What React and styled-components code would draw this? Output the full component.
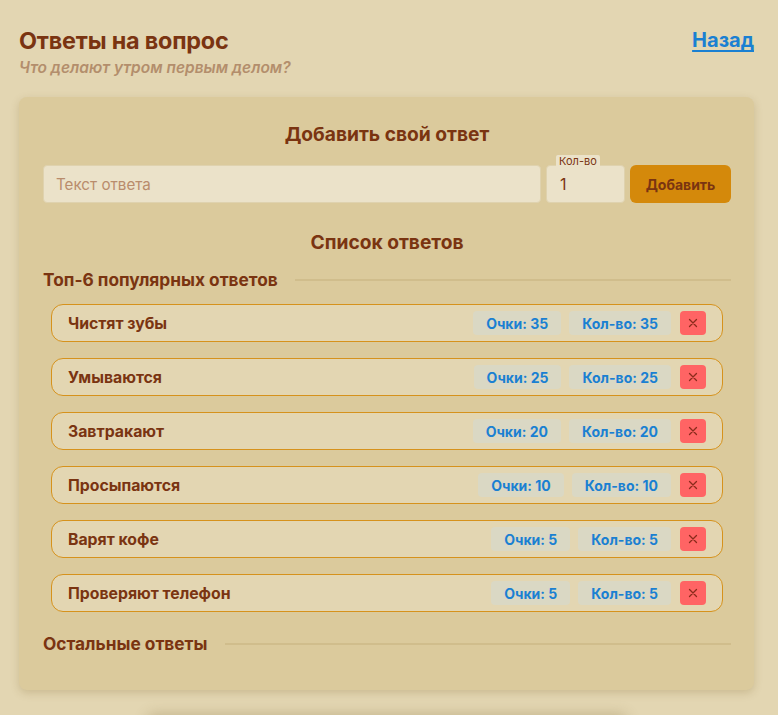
import React from "react";
import styled, { createGlobalStyle } from "styled-components";

const Global = createGlobalStyle`
  html, body { margin: 0; padding: 0; background: #e3d6b2; }
  body { font-family: Inter, "Noto Sans", "DejaVu Sans", sans-serif; overflow: hidden; }
  * { box-sizing: border-box; }
`;

const Page = styled.div`
  padding: 26px 24px 0 19px;
  min-height: 715px;
`;

const Header = styled.header`
  display: flex;
  justify-content: space-between;
  align-items: flex-start;
`;

const TitleBlock = styled.div`
  display: flex;
  flex-direction: column;
  gap: 3px;
`;

const Title = styled.h1`
  margin: 0;
  font-size: 23.4px;
  line-height: 29px;
  font-weight: 700;
  color: #7a3411;
  letter-spacing: -0.2px;
`;

const Subtitle = styled.p`
  margin: 0;
  font-size: 15.5px;
  line-height: 20px;
  font-style: italic;
  font-weight: 600;
  color: #b38e6c;
`;

const BackLink = styled.a`
  font-size: 20px;
  line-height: 29px;
  font-weight: 700;
  color: #1a80d2;
  text-decoration: underline;
  text-underline-offset: 3px;
  cursor: pointer;
`;

const Card = styled.section`
  margin-top: 19px;
  background: #dbca9c;
  border-radius: 8px;
  padding: 25px 23px 35px 24px;
  box-shadow: 0 3px 8px rgba(120, 90, 30, 0.22);
`;

const CardTitle = styled.h2`
  margin: ${(p) => p.$mt || 0}px 0 0;
  text-align: center;
  font-size: 19.2px;
  line-height: 24px;
  font-weight: 700;
  color: #7a3411;
`;

const Form = styled.div`
  display: flex;
  gap: 5px;
  margin-top: 19px;
  height: 38px;
`;

const TextInput = styled.input`
  flex: 1;
  height: 38px;
  border: 1px solid #dfd2ae;
  border-radius: 4px;
  background: #ebe2c9;
  padding: 0 12px;
  font-family: inherit;
  font-size: 15.2px;
  color: #7a3411;
  outline: none;
  &::placeholder { color: #b98c6c; }
`;

const QtyWrap = styled.div`
  position: relative;
  width: 79px;
`;

const QtyLabel = styled.span`
  position: absolute;
  top: -10px;
  left: 10px;
  padding: 0 3px;
  background: #ebe2c9;
  border-radius: 2px;
  font-size: 11px;
  line-height: 13px;
  color: #7a3411;
`;

const QtyInput = styled(TextInput)`
  width: 79px;
  flex: none;
  padding-left: 13px;
  font-size: 16px;
`;

const AddButton = styled.button`
  width: 101px;
  height: 38px;
  border: none;
  border-radius: 6px;
  background: #d4890b;
  color: #7a3411;
  font-family: inherit;
  font-size: 14px;
  font-weight: 700;
  cursor: pointer;
`;

const SectionHead = styled.div`
  display: flex;
  align-items: center;
  gap: 17px;
  margin-top: ${(p) => p.$mt}px;
  &::after {
    content: "";
    flex: 1;
    height: 2px;
    background: #d0bd8c;
  }
`;

const SectionTitle = styled.h3`
  margin: 0;
  font-size: 17.3px;
  line-height: 22px;
  font-weight: 700;
  color: #7a3411;
`;

const List = styled.ul`
  list-style: none;
  margin: 13px 8px 0;
  padding: 0;
  display: flex;
  flex-direction: column;
  gap: 16px;
`;

const Row = styled.li`
  display: flex;
  align-items: center;
  height: 38px;
  padding: 0 16px;
  border: 1px solid #d6921c;
  border-radius: 12px;
  background: #e3d6b2;
  gap: 8px;
`;

const AnswerText = styled.span`
  flex: 1;
  font-size: 15.8px;
  font-weight: 700;
  color: #7a3411;
`;

const Badge = styled.span`
  height: 24px;
  display: inline-flex;
  align-items: center;
  padding: 0 13px;
  border-radius: 4px;
  background: #dad8c4;
  color: #1a80d2;
  font-size: 14px;
  font-weight: 700;
`;

const DeleteButton = styled.button`
  width: 26px;
  height: 24px;
  margin-left: 1px;
  border: none;
  border-radius: 4px;
  background: #ff6464;
  display: flex;
  align-items: center;
  justify-content: center;
  padding: 0;
  cursor: pointer;
`;

const Below = styled.div`
  margin: 28px auto 0;
  width: 480px;
  height: 40px;
  border-radius: 8px;
  box-shadow: 0 -4px 14px rgba(110, 90, 40, 0.28);
`;

const answers = [
  { text: "Чистят зубы", points: 35, count: 35 },
  { text: "Умываются", points: 25, count: 25 },
  { text: "Завтракают", points: 20, count: 20 },
  { text: "Просыпаются", points: 10, count: 10 },
  { text: "Варят кофе", points: 5, count: 5 },
  { text: "Проверяют телефон", points: 5, count: 5 },
];

const Cross = () => (
  <svg width="10" height="10" viewBox="0 0 10 10">
    <path d="M1.5 1.5 L8.5 8.5 M8.5 1.5 L1.5 8.5" stroke="#8a2b1c" strokeWidth="1.3" strokeLinecap="round" />
  </svg>
);

export default function App() {
  return (
    <>
      <Global />
      <Page>
        <Header>
          <TitleBlock>
            <Title>Ответы на вопрос</Title>
            <Subtitle>Что делают утром первым делом?</Subtitle>
          </TitleBlock>
          <BackLink>Назад</BackLink>
        </Header>
        <Card>
          <CardTitle>Добавить свой ответ</CardTitle>
          <Form>
            <TextInput placeholder="Текст ответа" />
            <QtyWrap>
              <QtyLabel>Кол-во</QtyLabel>
              <QtyInput defaultValue="1" />
            </QtyWrap>
            <AddButton>Добавить</AddButton>
          </Form>
          <CardTitle $mt={27}>Список ответов</CardTitle>
          <SectionHead $mt={15}>
            <SectionTitle>Топ-6 популярных ответов</SectionTitle>
          </SectionHead>
          <List>
            {answers.map((a) => (
              <Row key={a.text}>
                <AnswerText>{a.text}</AnswerText>
                <Badge>Очки: {a.points}</Badge>
                <Badge>Кол-во: {a.count}</Badge>
                <DeleteButton aria-label="Удалить">
                  <Cross />
                </DeleteButton>
              </Row>
            ))}
          </List>
          <SectionHead $mt={21}>
            <SectionTitle>Остальные ответы</SectionTitle>
          </SectionHead>
        </Card>
        <Below />
      </Page>
    </>
  );
}
